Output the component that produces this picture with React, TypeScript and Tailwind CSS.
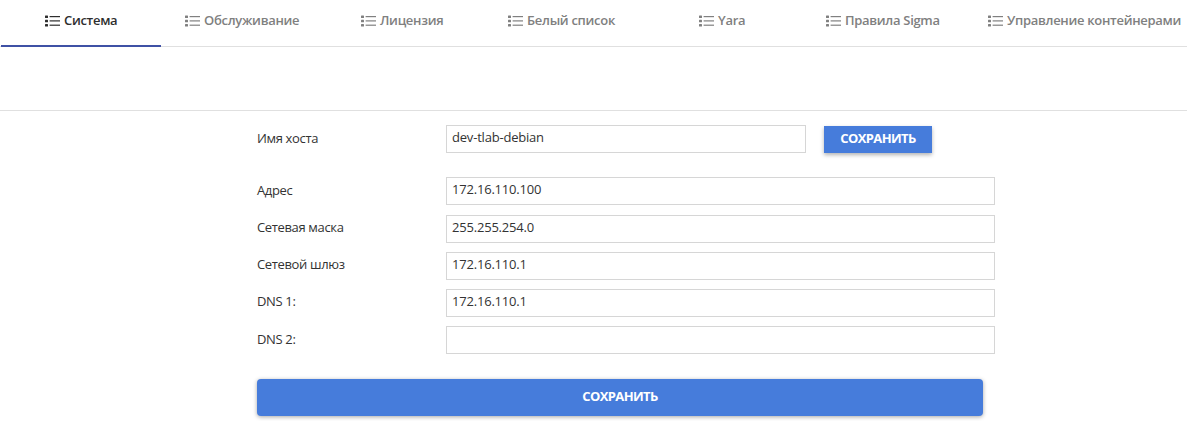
const font = "font-['Open_Sans','Noto_Sans',sans-serif]";

function ListIcon({ className }: { className: string }) {
  return (
    <svg viewBox="0 0 15 12" className={className} fill="currentColor" aria-hidden="true">
      <rect x="0" y="0.5" width="3" height="2.4" rx="0.5" />
      <rect x="0" y="4.8" width="3" height="2.4" rx="0.5" />
      <rect x="0" y="9.1" width="3" height="2.4" rx="0.5" />
      <rect x="4.6" y="1" width="10.4" height="1.2" />
      <rect x="4.6" y="5.3" width="10.4" height="1.2" />
      <rect x="4.6" y="9.6" width="10.4" height="1.2" />
    </svg>
  );
}

const tabs = [
  { label: "Обслуживание", w: "w-[176px]" },
  { label: "Лицензия", w: "w-[147px]" },
  { label: "Белый список", w: "w-[191px]" },
  { label: "Yara", w: "w-[127px]" },
  { label: "Правила Sigma", w: "w-[162px]" },
  { label: "Управление контейнерами", w: "w-[223px]" },
];

const rows = [
  { label: "Адрес", value: "172.16.110.100" },
  { label: "Сетевая маска", value: "255.255.254.0" },
  { label: "Сетевой шлюз", value: "172.16.110.1" },
  { label: "DNS 1:", value: "172.16.110.1" },
  { label: "DNS 2:", value: "" },
];

function Field({ value, width }: { value: string; width: string }) {
  return (
    <input
      readOnly
      value={value}
      className={`${width} h-7 border border-[#d6d6d6] bg-white px-[5px] pb-1 text-[13px] tracking-[-0.2px] text-[#333] outline-none`}
    />
  );
}

export default function App() {
  return (
    <div className={`${font} h-[421px] w-[1187px] overflow-hidden bg-white text-[#333]`}>
      <nav className="flex h-[47px] border-b border-[#e0e0e0] pl-px text-[13px] font-semibold tracking-[-0.3px]">
        <div className="relative flex h-[46px] w-40 items-center gap-[4px] pb-[5px] pl-[44px] text-[#2e2e2e]">
          <ListIcon className="h-3 w-[15px]" />
          <span className="whitespace-nowrap">Система</span>
          <div className="absolute bottom-[-1px] left-0 h-[2px] w-full bg-[#3f51a5]" />
        </div>
        {tabs.map((t) => (
          <div
            key={t.label}
            className={`${t.w} flex h-[46px] shrink-0 items-center gap-[4px] pb-[5px] pl-6 text-[#808080]`}
          >
            <ListIcon className="h-3 w-[15px] shrink-0" />
            <span className="whitespace-nowrap">{t.label}</span>
          </div>
        ))}
      </nav>

      <div className="h-[64px] border-b border-[#e0e0e0]" />

      <main className="pl-[257px] pt-[14px] text-[13px] tracking-[-0.35px]">
        <div className="flex items-center">
          <label className="w-[189px]">Имя хоста</label>
          <Field value="dev-tlab-debian" width="w-[360px]" />
          <button className="ml-[18px] h-[27px] w-[108px] bg-[#467cdb] pb-px text-[13px] font-bold tracking-[-0.6px] text-white shadow-[0_2px_4px_rgba(0,0,0,0.3)]">
            СОХРАНИТЬ
          </button>
        </div>

        <div className="mt-[24.25px] flex flex-col gap-[9.25px]">
          {rows.map((r) => (
            <div key={r.label} className="flex items-center">
              <label className="w-[189px] pb-[2px]">{r.label}</label>
              <Field value={r.value} width="w-[549px]" />
            </div>
          ))}
        </div>

        <button className="mt-[24.75px] h-[37px] w-[726px] rounded-[4px] bg-[#467cdb] pb-[2px] text-[13px] font-bold tracking-[-0.6px] text-white shadow-[0_1px_4px_rgba(0,0,0,0.35)]">
          СОХРАНИТЬ
        </button>
      </main>
    </div>
  );
}
